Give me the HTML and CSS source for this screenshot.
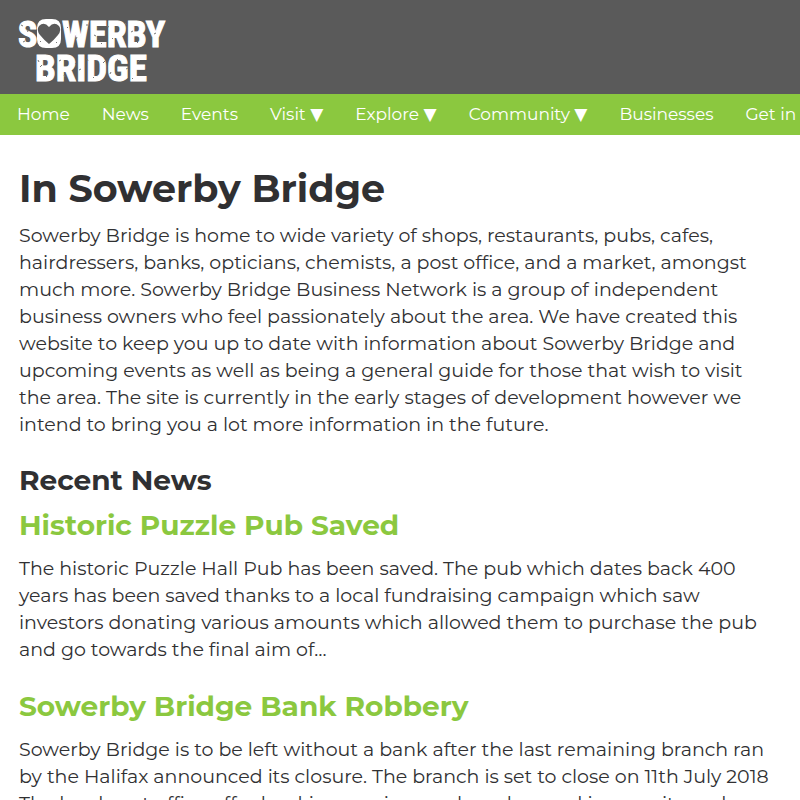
FILE: index.html
```
<!DOCTYPE html>
<html lang="en">
<head>
<meta charset="utf-8">
<meta name="viewport" content="width=device-width, initial-scale=1">
<title>Sowerby Bridge</title>
<link rel="stylesheet" href="styles.css">
</head>
<body>
<header class="masthead">
  <a class="logo" href="#" aria-label="Sowerby Bridge">
    <svg width="150" height="70" viewBox="0 0 150 70" aria-hidden="true">
      <g class="logo-text">
        <text x="0" y="31" font-size="36">S</text>
        <text x="44" y="31" font-size="36">WERBY</text>
        <text x="17" y="65" font-size="37">BRIDGE</text>
      </g>
      <path fill="#fff" fill-rule="evenodd" d="M28 3h6q9 0 9 9v11q0 9-9 9h-6q-9 0-9-9V12q0-9 9-9zM31 28q5-4 9-9q4-5 1-9q-5-5-10 1q-5-6-10-1q-3 4 1 9q4 5 9 9z"/>
      <path class="grit" d="M3 9l2 1M9 14l1 2M5 26l2-1M22 25l1 1M38 27l1-1M49 11l1 1M58 23l1-2M69 8v2M76 19l2 1M83 28l1-1M89 10l2 1M94 22l1 1M107 7l1 2M113 16l2-1M119 27l1-1M128 8l1 1M136 18l2-1M20 44l1 2M22 51l2-2M28 61l1-1M41 45l2-1M46 59l1 2M57 48l1-1M61 54l2-1M69 43l1 2M75 61l1 1M85 47l2-2M92 58l1-2M99 43l1 1M108 53l2-1M114 63l1-1M122 44l-2 2"/>
    </svg>
  </a>
</header>
<nav class="menu" aria-label="Main">
  <a href="#">Home</a>
  <a href="#">News</a>
  <a href="#">Events</a>
  <a href="#">Visit <span class="arrow">▼</span></a>
  <a href="#">Explore <span class="arrow">▼</span></a>
  <a href="#">Community <span class="arrow">▼</span></a>
  <a href="#">Businesses</a>
  <a href="#">Get in Touch</a>
</nav>
<main class="content">
  <section>
    <h1>In Sowerby Bridge</h1>
    <p>Sowerby Bridge is home to wide variety of shops, restaurants, pubs, cafes, hairdressers, banks, opticians, chemists, a post office, and a market, amongst much more. Sowerby Bridge Business Network is a group of independent business owners who feel passionately about the area. We have created this website to keep you up to date with information about Sowerby Bridge and upcoming events as well as being a general guide for those that wish to visit the area. The site is currently in the early stages of development however we intend to bring you a lot more information in the future.</p>
  </section>
  <section>
    <h2>Recent News</h2>
    <article>
      <h3><a href="#">Historic Puzzle Pub Saved</a></h3>
      <p>The historic Puzzle Hall Pub has been saved. The pub which dates back 400 years has been saved thanks to a local fundraising campaign which saw investors donating various amounts which allowed them to purchase the pub and go towards the final aim of…</p>
    </article>
    <article>
      <h3><a href="#">Sowerby Bridge Bank Robbery</a></h3>
      <p>Sowerby Bridge is to be left without a bank after the last remaining branch ran by the Halifax announced its closure. The branch is set to close on 11th July 2018 The local post office offer banking services and can be used in security and…</p>
    </article>
  </section>
</main>
</body>
</html>
```
FILE: styles.css
```
* { box-sizing: border-box; }
body {
  margin: 0;
  background: #fff;
  color: #303032;
  font: 19px/27px Montserrat, "DejaVu Sans", sans-serif;
  overflow-x: hidden;
}
a { color: inherit; text-decoration: none; }
.masthead { padding: 16px 18px 8px; background: #5a5a5a; }
.logo { display: block; }
.logo svg { display: block; }
.logo-text {
  fill: #fff;
  stroke: #fff;
  font-family: "Liberation Sans Narrow", "Roboto Condensed", "Liberation Sans", sans-serif;
  font-weight: bold;
}
.grit { fill: none; stroke: #777; stroke-width: 1; }
.menu {
  display: flex;
  gap: 32px;
  padding: 7px 17px;
  overflow: hidden;
  background: #8bc83f;
  color: #fff;
  font-size: 17px;
  white-space: nowrap;
}
.arrow { font-family: "DejaVu Sans", sans-serif; line-height: 1; }
.content { padding: 32px 24px 32px 19px; }
h1, h2, h3, p { margin: 0; }
h1 { margin-bottom: 11px; font-size: 38px; line-height: 44px; }
h2 { margin-bottom: 10px; font-size: 28px; line-height: 34px; }
h3 { margin-bottom: 12px; color: #8bc83f; font-size: 28px; line-height: 36px; }
p { margin-bottom: 25px; }
```
